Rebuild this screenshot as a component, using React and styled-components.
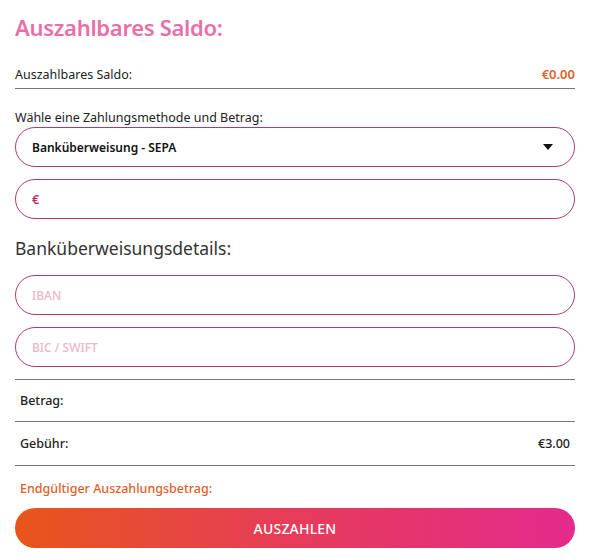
import React from 'react'
import styled, { createGlobalStyle } from 'styled-components'

const GlobalStyle = createGlobalStyle`
  *, *::before, *::after { box-sizing: border-box; }
  body {
    margin: 0;
    background: #fff;
    font-family: "Noto Sans", "Open Sans", sans-serif;
    color: #222;
  }
`

const Page = styled.div`
  width: 590px;
  padding: 12px 15px 0;
  display: flex;
  flex-direction: column;
`

const Title = styled.h1`
  margin: 0;
  font-size: 22px;
  font-weight: 600;
  color: #e870a8;
  letter-spacing: -0.3px;
  line-height: 30px;
`

const Row = styled.div`
  display: flex;
  justify-content: space-between;
  align-items: center;
  height: ${p => p.$h || 43}px;
  margin-top: ${p => p.$mt || 0}px;
  padding: 0 ${p => p.$pad || 0}px;
  border-bottom: ${p => (p.$line ? '1px solid #777' : 'none')};
  font-size: 12.5px;
  font-weight: ${p => (p.$bold ? 500 : 400)};
  color: ${p => p.$color || '#222'};
`

const Value = styled.span`
  font-weight: ${p => p.$weight || 500};
  color: ${p => p.$color || '#222'};
  font-size: ${p => p.$size || 12.5}px;
`

const Label = styled.div`
  font-size: 12.5px;
  line-height: 17px;
  color: #222;
  margin: 20px 0 1px;
`

const Field = styled.div`
  height: 40px;
  border: 1px solid #b03a70;
  border-radius: 20px;
  display: flex;
  align-items: center;
  justify-content: space-between;
  padding: 0 20px 0 16px;
  margin-top: ${p => p.$mt || 0}px;
  font-size: 12.5px;
`

const SelectText = styled.span`
  font-weight: 600;
  color: #111;
  font-size: 12px;
`

const Euro = styled.span`
  font-weight: 600;
  color: #c0285a;
`

const Placeholder = styled.span`
  color: #eab6cb;
  font-weight: 500;
  font-size: 12px;
`

const Caret = styled.span`
  width: 0;
  height: 0;
  border-left: 5px solid transparent;
  border-right: 5px solid transparent;
  border-top: 6px solid #111;
  margin-right: 1px;
`

const SubTitle = styled.h2`
  margin: 17px 0 15px;
  font-size: 17.5px;
  font-weight: 400;
  color: #333;
  line-height: 24px;
`

const Divider = styled.div`
  border-top: 1px solid #777;
  margin-top: 12px;
`

const Final = styled.div`
  font-size: 12.5px;
  line-height: 17px;
  font-weight: 500;
  color: #e0602a;
  padding: 14px 5px 0;
  height: 42px;
`

const Button = styled.button`
  height: 40px;
  border: none;
  border-radius: 20px;
  background: linear-gradient(90deg, #e8561b 0%, #e63c5a 50%, #e42a8c 100%);
  color: #fff;
  font-family: inherit;
  font-size: 14px;
  font-weight: 500;
  letter-spacing: 0.2px;
  cursor: pointer;
`

export default function App() {
  return (
    <>
      <GlobalStyle />
      <Page>
        <Title>Auszahlbares Saldo:</Title>
        <Row $line $h={29} $mt={18}>
          <span>Auszahlbares Saldo:</span>
          <Value $color="#e0602a" $size={13} $weight={600}>€0.00</Value>
        </Row>
        <Label>Wähle eine Zahlungsmethode und Betrag:</Label>
        <Field>
          <SelectText>Banküberweisung - SEPA</SelectText>
          <Caret />
        </Field>
        <Field $mt={12}>
          <Euro>€</Euro>
        </Field>
        <SubTitle>Banküberweisungsdetails:</SubTitle>
        <Field>
          <Placeholder>IBAN</Placeholder>
        </Field>
        <Field $mt={12}>
          <Placeholder>BIC / SWIFT</Placeholder>
        </Field>
        <Divider />
        <Row $line $bold $pad={5} $h={42}>
          <span>Betrag:</span>
        </Row>
        <Row $line $bold $pad={5} $h={44}>
          <span>Gebühr:</span>
          <Value>€3.00</Value>
        </Row>
        <Final>Endgültiger Auszahlungsbetrag:</Final>
        <Button>AUSZAHLEN</Button>
      </Page>
    </>
  )
}
